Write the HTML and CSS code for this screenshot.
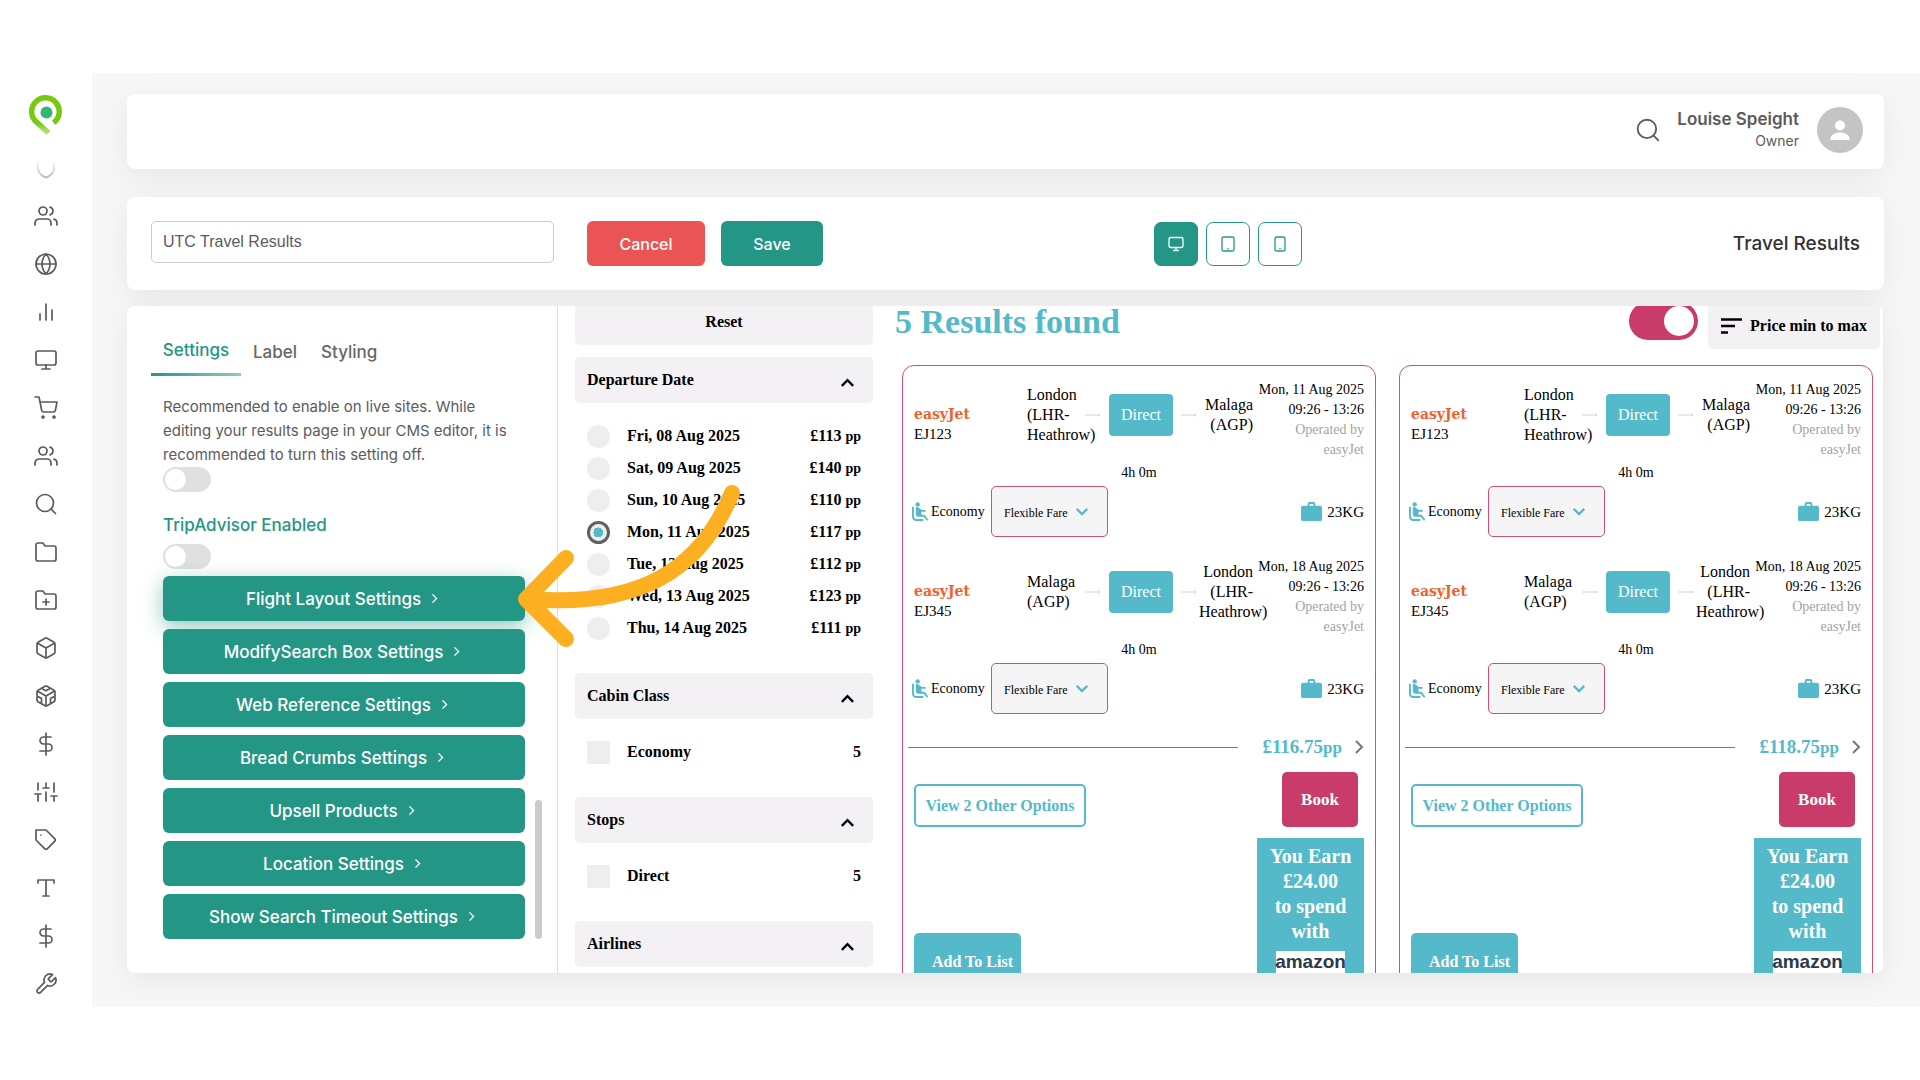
FILE: index.html
```html
<!DOCTYPE html>
<html lang="en">
<head>
<meta charset="utf-8">
<title>UTC Travel Results</title>
<link rel="stylesheet" href="styles.css">
</head>
<body>
<svg class="sprite" aria-hidden="true">
  <defs>
    <linearGradient id="fade" x1="0" y1="0" x2="0" y2="1"><stop offset="0.1" stop-color="#fff"/><stop offset="1" stop-color="#bdbdbd"/></linearGradient>
    <linearGradient id="leaf" gradientUnits="userSpaceOnUse" x1="0" y1="27" x2="0" y2="40"><stop offset="0" stop-color="#7ac70f"/><stop offset="1" stop-color="#c9e8a8"/></linearGradient>
  </defs>
  <symbol id="users" viewBox="0 0 24 24"><path d="M17 21v-2a4 4 0 0 0-4-4H5a4 4 0 0 0-4 4v2"/><circle cx="9" cy="7" r="4"/><path d="M23 21v-2a4 4 0 0 0-3-3.87M16 3.13a4 4 0 0 1 0 7.75"/></symbol>
  <symbol id="globe" viewBox="0 0 24 24"><circle cx="12" cy="12" r="10"/><path d="M2 12h20M12 2a15.3 15.3 0 0 1 4 10 15.3 15.3 0 0 1-4 10 15.3 15.3 0 0 1-4-10 15.3 15.3 0 0 1 4-10z"/></symbol>
  <symbol id="bars" viewBox="0 0 24 24"><path d="M18 20V10M12 20V4M6 20v-6"/></symbol>
  <symbol id="monitor" viewBox="0 0 24 24"><rect x="2" y="3" width="20" height="14" rx="2"/><path d="M8 21h8M12 17v4"/></symbol>
  <symbol id="cart" viewBox="0 0 24 24"><circle cx="9" cy="21" r="1"/><circle cx="20" cy="21" r="1"/><path d="M1 1h4l2.68 13.39a2 2 0 0 0 2 1.61h9.72a2 2 0 0 0 2-1.61L23 6H6"/></symbol>
  <symbol id="search" viewBox="0 0 24 24"><circle cx="11" cy="11" r="8.5"/><path d="M21.5 21.5l-4.6-4.6"/></symbol>
  <symbol id="folder" viewBox="0 0 24 24"><path d="M22 19a2 2 0 0 1-2 2H4a2 2 0 0 1-2-2V5a2 2 0 0 1 2-2h5l2 3h9a2 2 0 0 1 2 2z"/></symbol>
  <symbol id="folder-plus" viewBox="0 0 24 24"><path d="M22 19a2 2 0 0 1-2 2H4a2 2 0 0 1-2-2V5a2 2 0 0 1 2-2h5l2 3h9a2 2 0 0 1 2 2zM12 11v6M9 14h6"/></symbol>
  <symbol id="box" viewBox="0 0 24 24"><path d="M21 16V8a2 2 0 0 0-1-1.73l-7-4a2 2 0 0 0-2 0l-7 4A2 2 0 0 0 3 8v8a2 2 0 0 0 1 1.73l7 4a2 2 0 0 0 2 0l7-4A2 2 0 0 0 21 16zM3.27 6.96L12 12.01l8.73-5.05M12 22.08V12"/></symbol>
  <symbol id="cube" viewBox="0 0 24 24"><path d="M21 16V8a2 2 0 0 0-1-1.73l-7-4a2 2 0 0 0-2 0l-7 4A2 2 0 0 0 3 8v8a2 2 0 0 0 1 1.73l7 4a2 2 0 0 0 2 0l7-4A2 2 0 0 0 21 16zM7.5 4.21l4.5 2.6 4.5-2.6M7.5 19.79V14.6L3 12M21 12l-4.5 2.6v5.19M3.27 6.96L12 12.01l8.73-5.05M12 22.08V12"/></symbol>
  <symbol id="dollar" viewBox="0 0 24 24"><path d="M12 1v22M17 5H9.5a3.5 3.5 0 0 0 0 7h5a3.5 3.5 0 0 1 0 7H6"/></symbol>
  <symbol id="sliders" viewBox="0 0 24 24"><path d="M4 21v-7M4 10V3M12 21v-9M12 8V3M20 21v-5M20 12V3M1 14h6M9 8h6M17 16h6"/></symbol>
  <symbol id="tag" viewBox="0 0 24 24"><path d="M20.59 13.41l-7.17 7.17a2 2 0 0 1-2.83 0L2 12V2h10l8.59 8.59a2 2 0 0 1 0 2.82zM7 7h.01"/></symbol>
  <symbol id="type" viewBox="0 0 24 24"><path d="M4 7V4h16v3M9 20h6M12 4v16"/></symbol>
  <symbol id="tool" viewBox="0 0 24 24"><path d="M14.7 6.3a1 1 0 0 0 0 1.4l1.6 1.6a1 1 0 0 0 1.4 0l3.77-3.77a6 6 0 0 1-7.94 7.94l-6.91 6.91a2.12 2.12 0 0 1-3-3l6.91-6.91a6 6 0 0 1 7.94-7.94l-3.76 3.76z"/></symbol>
  <symbol id="right" viewBox="0 0 10 16"><path d="M2 2l6 6-6 6"/></symbol>
  <symbol id="up" viewBox="0 0 16 10"><path d="M2 8l6-6 6 6"/></symbol>
  <symbol id="down" viewBox="0 0 16 10"><path d="M2 2l6 6 6-6"/></symbol>
  <symbol id="flow" viewBox="0 0 16 6"><path d="M0 3h14M13 2l2 1-2 1"/></symbol>
  <symbol id="seat" viewBox="0 0 18 21"><circle cx="6" cy="2.5" r="2.3"/><path d="M4 6.5c0-1 1-1.5 2-1.2l4.5 3.2h4v1.8H10v3h3.5l3.8 5.4-1.5 1-3.3-4.300H7c-2 0-3-1-3-3z"/><path d="M0 5h2v10c0 2 1 3 3 3h7v2H5c-3.500 0-5-2-5-5z"/></symbol>
  <symbol id="case" viewBox="0 0 22 21"><path fill-rule="evenodd" d="M7 4V2a2 2 0 0 1 2-2h4a2 2 0 0 1 2 2v2h5a2 2 0 0 1 2 2v12a2 2 0 0 1-2 2H2a2 2 0 0 1-2-2V6a2 2 0 0 1 2-2zM9 4h4V2H9z"/></symbol>
</svg>

<div class="app">
  <nav class="rail" aria-label="Main">
    <a class="brand" href="#" aria-label="Home"><svg width="35" height="42" viewBox="-1 -1 35 42"><path d="M23.5 26.8A13.8 13.8 0 1 0 6.600 26.2L18.5 37" fill="none" stroke="url(#leaf)" stroke-width="5.5"/><circle cx="16.5" cy="16.5" r="6" fill="#33b574"/></svg></a>
    <a class="rail-link" href="#" aria-label="Security"><svg width="20" height="22" viewBox="0 0 20 22"><path d="M2 4l8-3 8 3v7c0 5-4 8-8 9.5C6 19 2 16 2 11z" fill="none" stroke="url(#fade)" stroke-width="2"/></svg></a>
    <a class="rail-link" href="#" aria-label="Customers"><svg class="icon"><use href="#users"/></svg></a>
    <a class="rail-link" href="#" aria-label="Sites"><svg class="icon"><use href="#globe"/></svg></a>
    <a class="rail-link" href="#" aria-label="Reports"><svg class="icon"><use href="#bars"/></svg></a>
    <a class="rail-link" href="#" aria-label="Display"><svg class="icon"><use href="#monitor"/></svg></a>
    <a class="rail-link" href="#" aria-label="Orders"><svg class="icon"><use href="#cart"/></svg></a>
    <a class="rail-link" href="#" aria-label="Team"><svg class="icon"><use href="#users"/></svg></a>
    <a class="rail-link" href="#" aria-label="Search"><svg class="icon"><use href="#search"/></svg></a>
    <a class="rail-link" href="#" aria-label="Files"><svg class="icon"><use href="#folder"/></svg></a>
    <a class="rail-link" href="#" aria-label="New folder"><svg class="icon"><use href="#folder-plus"/></svg></a>
    <a class="rail-link" href="#" aria-label="Products"><svg class="icon"><use href="#box"/></svg></a>
    <a class="rail-link" href="#" aria-label="Packages"><svg class="icon"><use href="#cube"/></svg></a>
    <a class="rail-link" href="#" aria-label="Pricing"><svg class="icon"><use href="#dollar"/></svg></a>
    <a class="rail-link" href="#" aria-label="Preferences"><svg class="icon"><use href="#sliders"/></svg></a>
    <a class="rail-link" href="#" aria-label="Tags"><svg class="icon"><use href="#tag"/></svg></a>
    <a class="rail-link" href="#" aria-label="Text"><svg class="icon"><use href="#type"/></svg></a>
    <a class="rail-link" href="#" aria-label="Payments"><svg class="icon"><use href="#dollar"/></svg></a>
    <a class="rail-link" href="#" aria-label="Tools"><svg class="icon"><use href="#tool"/></svg></a>
  </nav>

  <main class="main">
    <header class="panel topbar">
      <button class="plain" type="button" aria-label="Search"><svg class="icon icon-lg"><use href="#search"/></svg></button>
      <div class="user"><strong class="user-name">Louise Speight</strong><span class="user-role">Owner</span></div>
      <svg class="avatar" viewBox="0 0 46 46"><circle cx="23" cy="23" r="23" fill="#c4c4c4"/><circle cx="23" cy="18.5" r="5" fill="#fff"/><path d="M13.5 33v-1.5c0-3 4-6 9.5-6s9.5 3 9.5 6V33z" fill="#fff"/></svg>
    </header>

    <section class="panel toolbar">
      <input class="name-input" type="text" value="UTC Travel Results" aria-label="Page name">
      <div class="actions">
        <button class="btn btn-cancel" type="button">Cancel</button>
        <button class="btn btn-save" type="button">Save</button>
      </div>
      <div class="devices">
        <button class="device device-on" type="button" aria-label="Desktop"><svg width="16" height="16" viewBox="0 0 16 16"><rect x="1" y="1.500" width="14" height="10" rx="1.5"/><path d="M8 12v2.5M5.5 14.5h5"/></svg></button>
        <button class="device" type="button" aria-label="Tablet"><svg width="16" height="16" viewBox="0 0 16 16"><rect x="2" y="1" width="12" height="14" rx="1.5"/><path d="M8 12.5v.5"/></svg></button>
        <button class="device" type="button" aria-label="Phone"><svg width="16" height="16" viewBox="0 0 16 16"><rect x="3" y="1" width="10" height="14" rx="1.5"/><path d="M8 12.5v.5"/></svg></button>
      </div>
      <h1 class="page-title">Travel Results</h1>
    </section>

    <section class="panel workspace">
      <aside class="settings">
        <div class="tabs" role="tablist">
          <button class="tab tab-on" role="tab" aria-selected="true" type="button">Settings</button>
          <button class="tab" role="tab" type="button">Label</button>
          <button class="tab" role="tab" type="button">Styling</button>
        </div>
        <div class="settings-row">
        <div class="settings-body">
          <label class="hint" for="live">Recommended to enable on live sites. While editing your results page in your CMS editor, it is recommended to turn this setting off.</label>
          <input class="switch" id="live" type="checkbox">
          <label class="field-label" for="trip">TripAdvisor Enabled</label>
          <input class="switch" id="trip" type="checkbox">
          <div class="links">
            <button class="wide wide-on" type="button">Flight Layout Settings <svg class="go"><use href="#right"/></svg></button>
            <button class="wide" type="button">ModifySearch Box Settings <svg class="go"><use href="#right"/></svg></button>
            <button class="wide" type="button">Web Reference Settings <svg class="go"><use href="#right"/></svg></button>
            <button class="wide" type="button">Bread Crumbs Settings <svg class="go"><use href="#right"/></svg></button>
            <button class="wide" type="button">Upsell Products <svg class="go"><use href="#right"/></svg></button>
            <button class="wide" type="button">Location Settings <svg class="go"><use href="#right"/></svg></button>
            <button class="wide" type="button">Show Search Timeout Settings <svg class="go"><use href="#right"/></svg></button>
          </div>
        </div>
        <div class="scrollbar"></div>
        </div>
      </aside>

      <div class="preview">
        <div class="filters">
          <button class="reset" type="button">Reset</button>
          <button class="group" type="button">Departure Date <svg class="caret"><use href="#up"/></svg></button>
          <div class="options">
            <label class="option"><input class="radio" type="radio" name="date"><span class="option-name">Fri, 08 Aug 2025</span><span>£113 <small>pp</small></span></label>
            <label class="option"><input class="radio" type="radio" name="date"><span class="option-name">Sat, 09 Aug 2025</span><span>£140 <small>pp</small></span></label>
            <label class="option"><input class="radio" type="radio" name="date"><span class="option-name">Sun, 10 Aug 2025</span><span>£110 <small>pp</small></span></label>
            <label class="option"><input class="radio" type="radio" name="date" checked><span class="option-name">Mon, 11 Aug 2025</span><span>£117 <small>pp</small></span></label>
            <label class="option"><input class="radio" type="radio" name="date"><span class="option-name">Tue, 12 Aug 2025</span><span>£112 <small>pp</small></span></label>
            <label class="option"><input class="radio" type="radio" name="date"><span class="option-name">Wed, 13 Aug 2025</span><span>£123 <small>pp</small></span></label>
            <label class="option"><input class="radio" type="radio" name="date"><span class="option-name">Thu, 14 Aug 2025</span><span>£111 <small>pp</small></span></label>
          </div>
          <button class="group" type="button">Cabin Class <svg class="caret"><use href="#up"/></svg></button>
          <div class="options"><label class="option"><input class="tick" type="checkbox"><span class="option-name">Economy</span><span>5</span></label></div>
          <button class="group" type="button">Stops <svg class="caret"><use href="#up"/></svg></button>
          <div class="options"><label class="option"><input class="tick" type="checkbox"><span class="option-name">Direct</span><span>5</span></label></div>
          <button class="group" type="button">Airlines <svg class="caret"><use href="#up"/></svg></button>
        </div>

        <div class="results">
          <div class="results-head">
            <h2 class="results-title">5 Results found</h2>
            <input class="big-switch" type="checkbox" checked aria-label="Grid view">
            <button class="sort" type="button"><svg width="22" height="16" viewBox="0 0 22 16"><path d="M0 1.5h21M0 8h14M0 14.5h7" stroke="#000" stroke-width="2.5"/></svg>Price min to max</button>
          </div>

          <div class="cards">
            <article class="card">
              <div class="leg">
                <div class="route">
                  <div class="airline"><span class="logo">easyJet</span><span>EJ123</span></div>
                  <div class="path"><span class="from">London (LHR-Heathrow)</span><svg class="flow"><use href="#flow"/></svg><span class="stop">Direct</span><svg class="flow"><use href="#flow"/></svg><span class="to">Malaga (AGP)</span></div>
                  <div class="times">Mon, 11 Aug 2025<br>09:26 - 13:26<br><span class="muted">Operated by<br>easyJet</span></div>
                </div>
                <div class="duration">4h 0m</div>
                <div class="fare">
                  <svg class="seat"><use href="#seat"/></svg><span class="cabin">Economy</span>
                  <div class="select"><select aria-label="Fare"><option>Flexible Fare</option></select><svg class="drop"><use href="#down"/></svg></div>
                  <span class="bag"><svg class="case"><use href="#case"/></svg>23KG</span>
                </div>
              </div>
              <div class="leg">
                <div class="route">
                  <div class="airline"><span class="logo">easyJet</span><span>EJ345</span></div>
                  <div class="path"><span class="from">Malaga (AGP)</span><svg class="flow"><use href="#flow"/></svg><span class="stop">Direct</span><svg class="flow"><use href="#flow"/></svg><span class="to">London (LHR-Heathrow)</span></div>
                  <div class="times">Mon, 18 Aug 2025<br>09:26 - 13:26<br><span class="muted">Operated by<br>easyJet</span></div>
                </div>
                <div class="duration">4h 0m</div>
                <div class="fare">
                  <svg class="seat"><use href="#seat"/></svg><span class="cabin">Economy</span>
                  <div class="select"><select aria-label="Fare"><option>Flexible Fare</option></select><svg class="drop"><use href="#down"/></svg></div>
                  <span class="bag"><svg class="case"><use href="#case"/></svg>23KG</span>
                </div>
              </div>
              <div class="price-row"><span class="rule"></span><span class="price">£116.75<small>pp</small></span><svg class="next"><use href="#right"/></svg></div>
              <div class="foot">
                <div class="foot-left"><button class="more" type="button">View 2 Other Options</button><button class="add" type="button">Add To List</button></div>
                <div class="foot-right"><button class="book" type="button">Book</button>
                  <div class="earn">You Earn £24.00<br>to spend with<span class="amazon">amazon<svg class="smile" width="40" height="10" viewBox="0 0 40 10"><path d="M0 1c10 8 24 8 33 1M30 .5l6-.5-1 5" fill="none" stroke="#f90" stroke-width="2"/></svg></span></div></div>
              </div>
            </article>

            <article class="card">
              <div class="leg">
                <div class="route">
                  <div class="airline"><span class="logo">easyJet</span><span>EJ123</span></div>
                  <div class="path"><span class="from">London (LHR-Heathrow)</span><svg class="flow"><use href="#flow"/></svg><span class="stop">Direct</span><svg class="flow"><use href="#flow"/></svg><span class="to">Malaga (AGP)</span></div>
                  <div class="times">Mon, 11 Aug 2025<br>09:26 - 13:26<br><span class="muted">Operated by<br>easyJet</span></div>
                </div>
                <div class="duration">4h 0m</div>
                <div class="fare">
                  <svg class="seat"><use href="#seat"/></svg><span class="cabin">Economy</span>
                  <div class="select"><select aria-label="Fare"><option>Flexible Fare</option></select><svg class="drop"><use href="#down"/></svg></div>
                  <span class="bag"><svg class="case"><use href="#case"/></svg>23KG</span>
                </div>
              </div>
              <div class="leg">
                <div class="route">
                  <div class="airline"><span class="logo">easyJet</span><span>EJ345</span></div>
                  <div class="path"><span class="from">Malaga (AGP)</span><svg class="flow"><use href="#flow"/></svg><span class="stop">Direct</span><svg class="flow"><use href="#flow"/></svg><span class="to">London (LHR-Heathrow)</span></div>
                  <div class="times">Mon, 18 Aug 2025<br>09:26 - 13:26<br><span class="muted">Operated by<br>easyJet</span></div>
                </div>
                <div class="duration">4h 0m</div>
                <div class="fare">
                  <svg class="seat"><use href="#seat"/></svg><span class="cabin">Economy</span>
                  <div class="select"><select aria-label="Fare"><option>Flexible Fare</option></select><svg class="drop"><use href="#down"/></svg></div>
                  <span class="bag"><svg class="case"><use href="#case"/></svg>23KG</span>
                </div>
              </div>
              <div class="price-row"><span class="rule"></span><span class="price">£118.75<small>pp</small></span><svg class="next"><use href="#right"/></svg></div>
              <div class="foot">
                <div class="foot-left"><button class="more" type="button">View 2 Other Options</button><button class="add" type="button">Add To List</button></div>
                <div class="foot-right"><button class="book" type="button">Book</button>
                  <div class="earn">You Earn £24.00<br>to spend with<span class="amazon">amazon<svg class="smile" width="40" height="10" viewBox="0 0 40 10"><path d="M0 1c10 8 24 8 33 1M30 .5l6-.5-1 5" fill="none" stroke="#f90" stroke-width="2"/></svg></span></div></div>
              </div>
            </article>
          </div>
        </div>
      </div>
    </section>
  </main>
</div>

<svg class="pointer" width="224" height="164" viewBox="518 484 224 164" aria-hidden="true"><path d="M732 493C700 570 640 608 528 599M566 558L526 599L566 639" fill="none" stroke="#fdaf22" stroke-width="16" stroke-linecap="round" stroke-linejoin="round"/></svg>
</body>
</html>
```
FILE: styles.css
```css
* { box-sizing: border-box; }

body {
  margin: 0;
  padding: 73px 0;
  height: 100vh;
  background: #fff;
  color: #5b5b5b;
  font-family: Inter, sans-serif;
  font-size: 16px;
  overflow: hidden;
}

button, input, select { font: inherit; color: inherit; margin: 0; }
button { border: 0; padding: 0; background: none; cursor: pointer; }
h1, h2 { margin: 0; }
svg { display: block; flex: none; }
.sprite { position: absolute; width: 0; height: 0; }

.icon { width: 24px; height: 24px; fill: none; stroke: #5b5b5b; stroke-width: 1.7; stroke-linecap: round; stroke-linejoin: round; }
.icon-lg { width: 26px; height: 26px; }

.app { display: flex; height: 100%; }

/* Side rail */
.rail { width: 92px; flex: none; display: flex; flex-direction: column; align-items: center; }
.brand { height: 71px; padding-top: 22px; flex: none; }
.rail-link { height: 48px; display: flex; align-items: center; flex: none; }

.main {
  flex: 1;
  min-width: 0;
  display: flex;
  flex-direction: column;
  padding: 21px 36px 34px 35px;
  background: #f7f7f7;
  overflow: hidden;
}
.panel { background: #fff; border-radius: 8px; box-shadow: 0 8px 32px rgba(0, 0, 0, 0.07); }

/* Top bar */
.topbar { height: 75px; flex: none; display: flex; align-items: center; justify-content: flex-end; padding: 0 21px 4px 24px; }
.user { display: flex; flex-direction: column; text-align: right; margin: 0 18px 0 16px; line-height: 22px; }
.user-name { font-weight: 600; font-size: 17px; }
.user-role { font-size: 14px; }
.avatar { width: 46px; height: 46px; }

/* Toolbar */
.toolbar { flex: none; margin-top: 28px; padding: 24px; display: flex; align-items: center; }
.name-input { width: 403px; height: 42px; align-self: flex-start; border: 1px solid #ccc; border-radius: 5px; padding: 0 11px; font-family: "Liberation Sans", sans-serif; background: #fff; }
.actions { display: flex; gap: 16px; margin-left: 33px; }
.btn { height: 45px; border-radius: 6px; color: #fff; font-weight: 500; }
.btn-cancel { width: 118px; background: #eb5455; }
.btn-save { width: 102px; background: #249685; }
.devices { display: flex; gap: 8px; margin: 0 auto; }
.device { width: 44px; height: 44px; border: 1px solid #249685; border-radius: 7px; display: grid; place-items: center; }
.device svg { fill: none; stroke: #249685; stroke-width: 1.3; stroke-linecap: round; }
.device-on { background: #249685; }
.device-on svg { stroke: #fff; }
.page-title { min-width: 227px; text-align: right; font-size: 19px; font-weight: 500; color: #333; }

/* Workspace */
.workspace { flex: 1; min-height: 0; margin-top: 16px; display: flex; overflow: hidden; }
.settings { width: 431px; flex: none; border-right: 1px solid #ddd; padding: 20px 15px 36px 24px; display: flex; flex-direction: column; }
.tabs { display: flex; height: 50px; gap: 12px; color: #666; font-size: 17px; }
.tab { padding: 4px 0 0; height: 48px; font-weight: 500; }
.tab + .tab { padding-left: 6px; padding-right: 6px; }
.tab-on { width: 90px; height: 50px; padding: 0; color: #249685; border-bottom: 3px solid #249685; border-image: linear-gradient(90deg, #249685, #92cac2) 1; }
.tab-on + .tab { padding-left: 0; }
.settings-row { flex: 1; display: flex; gap: 10px; align-items: flex-end; }
.settings-body { flex: 1; align-self: stretch; display: flex; flex-direction: column; align-items: flex-start; padding: 19px 0 0 12px; }
.hint { font-size: 15px; line-height: 24px; }
.switch { appearance: none; width: 48px; height: 25px; border-radius: 13px; background: #e0e0e0; padding: 2px; flex: none; }
.switch::before { content: ""; display: block; width: 21px; height: 21px; border-radius: 50%; background: #fff; }
.field-label { margin: 22px 0 7px; line-height: 23px; font-size: 17px; font-weight: 500; color: #249685; }
.links { align-self: stretch; margin-top: 7px; display: flex; flex-direction: column; gap: 8px; }
.wide { height: 45px; padding-right: 4px; border-radius: 6px; background: #249685; color: #fff; font-size: 17px; font-weight: 500; display: flex; align-items: center; justify-content: center; gap: 10px; flex: none; }
.wide-on { box-shadow: 0 6px 20px rgba(36, 150, 133, 0.5); }
.go { width: 7px; height: 11px; fill: none; stroke: #fff; stroke-width: 2; }
.scrollbar { width: 7px; height: 139px; border-radius: 4px; background: #cbcbcb; flex: none; }

/* Preview */
.preview { flex: 1; min-width: 0; padding: 0 3px 0 17px; margin-top: -7px; display: flex; gap: 22px; border-right: 1px solid #eee; font-family: "Liberation Serif", serif; color: #000; }
.filters { width: 298px; flex: none; display: flex; flex-direction: column; font-weight: 700; }
.reset, .group { height: 46px; flex: none; background: #f3f1f3; border-radius: 5px; font-weight: 700; }
.reset { margin-bottom: 12px; }
.group { display: flex; align-items: center; justify-content: space-between; padding: 0 18px 0 12px; }
.caret { width: 15px; height: 10px; fill: none; stroke: #000; stroke-width: 2.5; margin-top: 6px; }
.options { padding: 17px 12px 29px; }
.option { display: flex; align-items: center; height: 32px; }
.option-name { flex: 1; margin-left: 17px; }
.option small { font-size: 14px; }
.radio, .tick { appearance: none; width: 23px; height: 23px; background: #eee; flex: none; }
.radio { border-radius: 50%; }
.radio:checked { border: 3px solid #606060; background: radial-gradient(circle, #54bac9 0 5px, #eee 5px); }

.results { flex: 1; min-width: 0; }
.results-head { display: flex; align-items: flex-start; height: 66px; padding-top: 3px; }
.results-title { flex: 1; font-size: 34px; line-height: 40px; color: #54bac9; }
.big-switch { appearance: none; width: 69px; height: 38px; border-radius: 19px; background: #c93b68; padding: 4px; display: flex; justify-content: flex-end; }
.big-switch::before { content: ""; width: 30px; height: 30px; border-radius: 50%; background: #fff; }
.sort { margin-left: 10px; width: 172px; height: 47px; border-radius: 5px; background: #f3f1f3; font-weight: 700; display: flex; align-items: center; justify-content: center; gap: 7px; }

.cards { display: grid; grid-template-columns: 1fr 1fr; gap: 23px; padding: 0 7px; }
.card { border: 1px solid #cf4f78; border-radius: 12px; padding: 0 11px; min-width: 0; line-height: 20px; height: 700px; }
.leg { padding: 14px 0 6px; }
.route { display: grid; grid-template-columns: 1fr 228px 1fr; }
.airline { display: flex; flex-direction: column; padding-top: 24px; font-size: 15px; }
.logo { font-family: "DejaVu Serif", serif; font-size: 14px; font-weight: 700; color: #f4602c; }
.path { display: flex; align-items: center; height: 70px; padding-left: 2px; }
.from { width: 58px; }
.to { width: 54px; margin-left: 2px; text-align: right; }
.flow { width: 16px; height: 6px; fill: none; stroke: #d4d4d4; }
.stop { width: 64px; height: 42px; margin: 0 8px; border-radius: 4px; background: #54bac9; color: #fff; display: grid; place-items: center; }
.times { font-size: 14px; text-align: right; white-space: nowrap; }
.muted { color: #a3a3a3; }
.duration { margin-top: 3px; text-align: center; font-size: 14px; }
.fare { display: flex; align-items: center; height: 51px; margin-top: 3px; }
.seat { width: 17px; height: 20px; fill: #54bac9; margin: 0 2px 0 -2px; }
.cabin { font-size: 14px; width: 60px; }
.select { display: grid; width: 117px; height: 51px; align-items: center; }
.select select { grid-area: 1 / 1; appearance: none; height: 51px; padding: 2px 0 0 12px; border: 1px solid #cf4f78; border-radius: 5px; background: #f5f5f5; font-size: 12px; color: #000; }
.drop { grid-area: 1 / 1; justify-self: end; margin-right: 19px; width: 14px; height: 9px; fill: none; stroke: #54bac9; stroke-width: 2.5; pointer-events: none; z-index: 1; }
.bag { margin-left: auto; display: flex; align-items: center; gap: 5px; font-size: 15px; }
.case { width: 21px; height: 20px; fill: #54bac9; }
.price-row { display: flex; align-items: center; margin: 15px 0 0 -6px; height: 24px; }
.rule { flex: 1; height: 1px; background: #cf4f78; margin-right: 24px; }
.price { font-size: 19px; font-weight: 700; color: #54bac9; }
.price small { font-size: 17px; }
.next { width: 10px; height: 16px; margin-left: 12px; fill: none; stroke: #777; stroke-width: 2; }
.foot { display: flex; justify-content: space-between; margin-top: 13px; }
.foot-left { display: flex; flex-direction: column; align-items: flex-start; padding-top: 12px; }
.more { width: 172px; height: 43px; border: 2px solid #54bac9; border-radius: 5px; font-weight: 700; color: #54bac9; }
.add { margin-top: 106px; width: 107px; height: 58px; padding-left: 10px; border-radius: 5px; background: #54bac9; color: #fff; font-weight: 700; }
.foot-right { display: flex; flex-direction: column; align-items: flex-end; gap: 11px; }
.book { width: 76px; height: 55px; margin-right: 6px; border-radius: 5px; background: #c93b68; color: #fff; font-weight: 700; font-size: 17px; }
.earn { width: 107px; padding: 6px 10px 20px; background: #54bac9; color: #fff; font-size: 20px; line-height: 25px; font-weight: 700; text-align: center; }
.amazon { display: flex; flex-direction: column; align-items: center; width: 69px; margin: 7px auto 0; background: #fff; color: #2b3a4a; font-family: "Liberation Sans", sans-serif; font-size: 19px; line-height: 22px; }

.pointer { position: absolute; left: 518px; top: 484px; pointer-events: none; z-index: 5; }
```
